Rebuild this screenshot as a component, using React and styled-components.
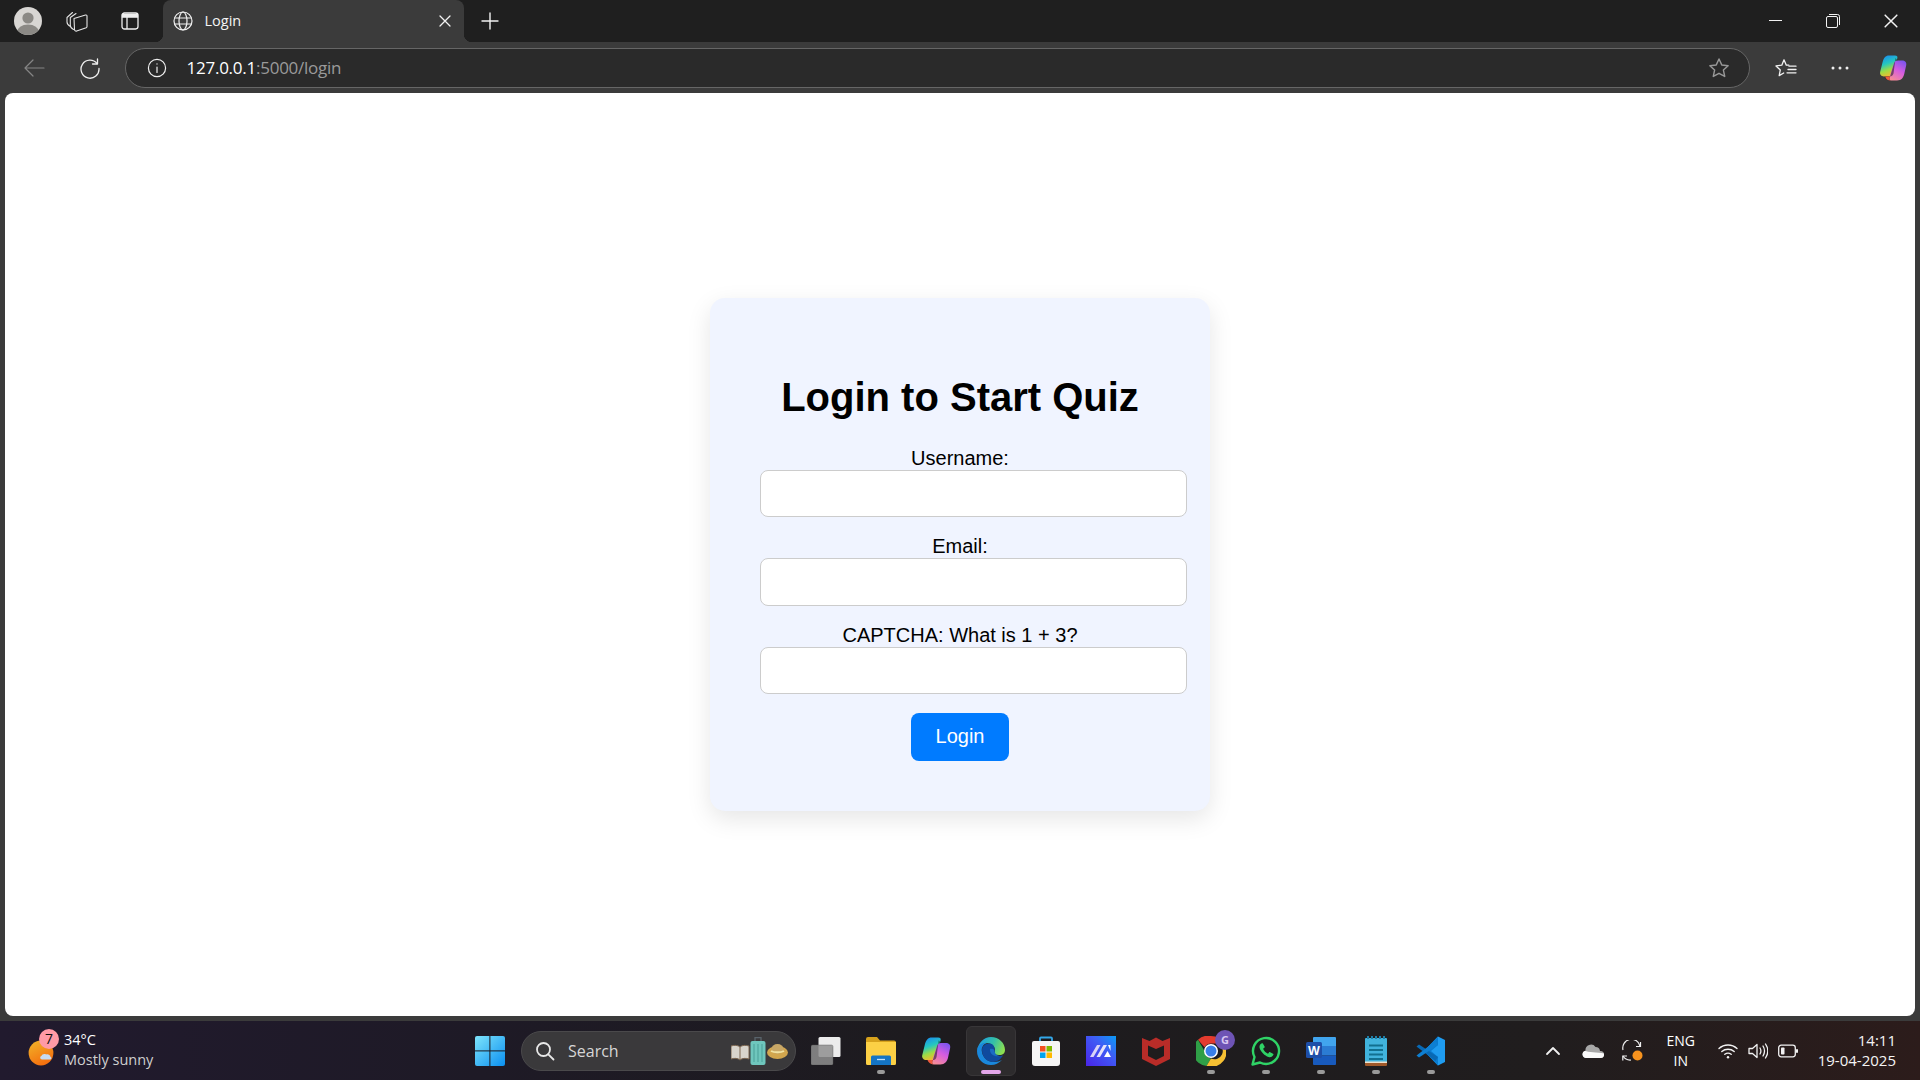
import styled, { createGlobalStyle } from "styled-components"

const GlobalStyle = createGlobalStyle`
	* {
		box-sizing: border-box;
	}
	html,
	body {
		margin: 0;
		height: 100%;
		overflow: hidden;
		background: #3b3b3b;
	}
`

const uiFont = `"Open Sans", "Noto Sans", sans-serif`

const Line = ({ c = "#fff", w = 1.4, children, size = 24, view = "0 0 24 24" }) => (
	<svg width={size} height={size} viewBox={view} fill="none" stroke={c} strokeWidth={w} strokeLinecap="round" strokeLinejoin="round">
		{children}
	</svg>
)

const AvatarIcon = () => (
	<svg width="28" height="28" viewBox="0 0 28 28">
		<circle cx="14" cy="14" r="14" fill="#d8d6d3" />
		<clipPath id="av">
			<circle cx="14" cy="14" r="14" />
		</clipPath>
		<g clipPath="url(#av)" fill="#8b8985">
			<circle cx="14" cy="11" r="5.6" />
			<ellipse cx="14" cy="25" rx="11" ry="7.5" />
		</g>
	</svg>
)

const CollectionsIcon = () => (
	<Line size={24} w={1.1} c="#e4e4e4">
		<path d="M5.500 17.500C3.500 16.500 2 15 2 13V8.500L7.500 3.500" />
		<path d="M8.500 20.500c-2-.9-3.200-2.400-3.200-4.200V8.500L11 4.500" />
		<path d="M9 9.500 20.500 6c.7-.2 1.500.3 1.500 1v10.500c0 .6-.3 1-.8 1.200l-9.500 3.300c-1 .4-2.200-.3-2.200-1.400Z" />
	</Line>
)

const VerticalTabsIcon = () => (
	<svg width="18" height="18" viewBox="0 0 18 18" fill="none" stroke="#efefef" strokeWidth="1.3">
		<rect x="1" y="1" width="16" height="16" rx="2.4" />
		<path d="M1.5 2.5h15v2.6h-15z" fill="#efefef" />
		<path d="M6 5v12" />
	</svg>
)

const GlobeIcon = () => (
	<Line size={20} w={1.2} c="#f0f0f0" view="0 0 20 20">
		<circle cx="10" cy="10" r="9" />
		<ellipse cx="10" cy="10" rx="4" ry="9" />
		<path d="M1.6 7h16.8M1.6 13h16.8" />
	</Line>
)

const CloseIcon = ({ size = 12 }) => (
	<Line size={size} w={1.3} c="#f2f2f2" view="0 0 12 12">
		<path d="M1 1l10 10M11 1 1 11" />
	</Line>
)

const PlusIcon = () => (
	<Line size={18} w={1.4} c="#f2f2f2" view="0 0 18 18">
		<path d="M9 1v16M1 9h16" />
	</Line>
)

const BackIcon = () => (
	<Line size={22} w={1.2} c="#858585" view="0 0 22 22">
		<path d="M2 11h19M10 3l-8 8 8 8" />
	</Line>
)

const RefreshIcon = () => (
	<Line size={22} w={1.3} c="#f0f0f0" view="0 0 22 22">
		<path d="M18 6.500A9 9 0 1 0 20 11.500" />
		<path d="M18.500 2v5h-5" />
	</Line>
)

const InfoIcon = () => (
	<Line size={20} w={1.2} c="#f0f0f0" view="0 0 20 20">
		<circle cx="10" cy="10" r="8.6" />
		<path d="M10 9v5.4M10 5.8v.3" />
	</Line>
)

const starPath = "M10 1.8l2.5 5.4 5.8.7-4.3 4 1.2 5.8L10 14.8l-5.2 2.9L6 11.9l-4.3-4 5.8-.7Z"

const StarIcon = () => (
	<Line size={22} w={1.3} c="#989898" view="0 0 20 20">
		<path d={starPath} />
	</Line>
)

const FavoritesIcon = () => (
	<Line size={22} w={1.3} c="#f2f2f2" view="0 0 22 20">
		<path d="M9 1.8l2.3 5.4h2.5M8.7 15 4.2 17.6 5.3 11.9 1 7.9l5.8-.7L9 1.8" />
		<path d="M14 8.2h7M13 11.5h8M12 14.8h9" />
	</Line>
)

const DotsIcon = () => (
	<svg width="18" height="4" viewBox="0 0 18 4" fill="#efefef">
		<circle cx="2" cy="2" r="1.5" />
		<circle cx="9" cy="2" r="1.5" />
		<circle cx="16" cy="2" r="1.5" />
	</svg>
)

const CopilotIcon = ({ id, size = 28 }) => (
	<svg width={size} height={size} viewBox="0 0 28 28">
		<defs>
			<linearGradient id={`${id}a`} x1="0.2" y1="0" x2="0.5" y2="1">
				<stop offset="0" stopColor="#1a8cf0" />
				<stop offset="0.4" stopColor="#25c7c0" />
				<stop offset="0.7" stopColor="#9ddc45" />
				<stop offset="1" stopColor="#f6b82e" />
			</linearGradient>
			<linearGradient id={`${id}b`} x1="0.8" y1="0" x2="0.3" y2="1">
				<stop offset="0" stopColor="#7a55ee" />
				<stop offset="0.5" stopColor="#d65ce0" />
				<stop offset="1" stopColor="#f58a9a" />
			</linearGradient>
		</defs>
		<path d="M10 1.500h6c2 0 2.800 1 2.300 2.800L14 19.500c-.6 2-1.800 3-4 3H5C2.300 22.500.5 20.500 1.200 17.800L3.500 8.500C4.600 4 6.500 1.500 10 1.500Z" fill={`url(#${id}a)`} />
		<path d="M18.500 6.500h4.500c3 0 4.800 1.700 4.200 4.800l-1.900 8.500c-1 4.300-3 6.700-7.300 6.700h-6c-1.700 0-2.400-1.100-1.900-2.500L15 9.500c.6-2 1.600-3 3.500-3Z" fill={`url(#${id}b)`} />
		<path d="M16.500 4 18.500 6.500c-1.900 0-2.900 1-3.500 3L10.600 24c-.3 1 0 2 .9 2.500-2.500 0-5-1-6-4h5c2.200 0 3.400-1 4-3Z" fill="#1a1a22" opacity="0.55" />
		<path d="M6 22.500c1.300 3 3 4 5.500 4-.9-.5-1.200-1.500-.9-2.500l.5-1.500Z" fill="#ef5a3c" />
	</svg>
)

const SunCloudIcon = () => (
	<svg width="30" height="30" viewBox="0 0 30 30">
		<defs>
			<linearGradient id="sun" x1="0" y1="0" x2="0.5" y2="1">
				<stop offset="0" stopColor="#f1b62a" />
				<stop offset="1" stopColor="#f4700f" />
			</linearGradient>
		</defs>
		<circle cx="13" cy="15" r="12.4" fill="url(#sun)" />
		<path d="M14 21.500c-1.800 0-2.600-2.700-.6-3.400.6-2 3-2.600 4.700-1.600 1.700-.7 4.200.3 4.300 2.200 1.700 1 1 2.800-.7 2.800Z" fill="#c7dbf2" />
	</svg>
)

const WinLogo = () => (
	<svg width="30" height="30" viewBox="0 0 30 30">
		<defs>
			<linearGradient id="win" x1="0" y1="0" x2="1" y2="1">
				<stop offset="0" stopColor="#7ee4fb" />
				<stop offset="1" stopColor="#0a8ff0" />
			</linearGradient>
		</defs>
		<rect width="30" height="30" rx="2" fill="url(#win)" />
		<path d="M14.900 0v30M0 14.900h30" stroke="#1b1920" strokeWidth="1" />
	</svg>
)

const SearchIcon = () => (
	<Line size={20} w={1.8} c="#e8e8e8" view="0 0 20 20">
		<circle cx="8.500" cy="8.500" r="6.500" />
		<path d="M13.300 13.300 18.500 18.500" />
	</Line>
)

const SearchArt = () => (
	<svg width="57" height="28" viewBox="0 0 57 28">
		<path d="M0 9C3 8 7 8 9 10c2-2 6-2 9-1v13c-3-1-7-1-9 1-2-2-6-2-9-1Z" fill="#d8d4cc" stroke="#7c6650" />
		<path d="M9 10v13" stroke="#7c6650" />
		<path d="M24 4V.7h6V4" fill="none" stroke="#59636b" strokeWidth="1.300" />
		<rect x="19.500" y="4" width="15" height="24" rx="2" fill="#6fc6bd" />
		<path d="M23 7v18M27 7v18M31 7v18" stroke="#4a9f98" />
		<ellipse cx="46.500" cy="15.500" rx="10.500" ry="6.500" fill="#d2a64e" />
		<ellipse cx="46.500" cy="12" rx="6" ry="5" fill="#c8a766" />
		<path d="M40 14c3 1.800 10 1.800 13 0" stroke="#f1e3a2" strokeWidth="2" fill="none" />
	</svg>
)

const TaskViewIcon = () => (
	<svg width="30" height="28" viewBox="0 0 30 28">
		<rect x="7.500" y="0" width="22" height="20" rx="1.500" fill="#ececec" />
		<rect x="0" y="8" width="22" height="20" rx="1.500" fill="#8f8f8f" fillOpacity="0.85" />
		<rect x="0" y="8" width="22" height="20" rx="1.500" fill="none" stroke="#555" strokeOpacity="0.4" />
	</svg>
)

const ExplorerIcon = () => (
	<svg width="30" height="28" viewBox="0 0 30 28">
		<path d="M0 2a2 2 0 0 1 2-2h9l3 3.500h14a2 2 0 0 1 2 2V10H0Z" fill="#d7a21c" />
		<path d="M0 5h30v21.500a1.500 1.500 0 0 1-1.500 1.500h-27A1.500 1.500 0 0 1 0 26.500Z" fill="#fcd045" />
		<path d="M5 20a1.500 1.500 0 0 1 1.500-1.500h17A1.500 1.500 0 0 1 25 20v8H5Z" fill="#1474c4" />
		<path d="M11 22.500h8" stroke="#bfe0fa" strokeWidth="1.300" />
	</svg>
)

const EdgeIcon = () => (
	<svg width="30" height="30" viewBox="0 0 30 30">
		<defs>
			<linearGradient id="edgeA" x1="0" y1="0.3" x2="1" y2="0.6">
				<stop offset="0" stopColor="#1a9be6" />
				<stop offset="0.55" stopColor="#35c1a6" />
				<stop offset="1" stopColor="#8fe04e" />
			</linearGradient>
		</defs>
		<path d="M1 15C2 7 8 1 15 1c8 0 14 6 14 13 0 3-2 5-6 5-3 0-5-1-5-2s1-1 1-3c0-4-4-7-8-7-5 0-9 3-10 8Z" fill="url(#edgeA)" />
		<path d="M1 15C1 10 6 6 11 7c-4 1-6 5-5 9 1 6 6 10 12 10 3 0 6-1 8-2-3 3-7 5-11 5C7 29 1 23 1 15Z" fill="#1a88dc" />
		<path d="M6 14c0-4 4-7 8-6.500 3 .5 5 3 4.500 6.500-.5 3 2 6 5 6 1.500 0 3-.3 3.500-1-1 3-5 7-10 7-6 0-11-5-11-12Z" fill="#0f4a9e" />
		<path d="M14 13c2-.5 4 .5 4.500 1-.5 3 2 6 5 6-4 1-10-1-9.500-7Z" fill="#1a6cc4" />
	</svg>
)

const StoreIcon = () => (
	<svg width="30" height="30" viewBox="0 0 30 30">
		<path d="M9 6V2.500a1 1 0 0 1 1-1h10a1 1 0 0 1 1 1V6" fill="none" stroke="#33a7e8" strokeWidth="1.800" />
		<path d="M1 7a2 2 0 0 1 2-2h24a2 2 0 0 1 2 2v20a3 3 0 0 1-3 3H4a3 3 0 0 1-3-3Z" fill="#f5f5f5" />
		<rect x="9" y="10" width="5.500" height="5.500" fill="#f25022" />
		<rect x="15.500" y="10" width="5.500" height="5.500" fill="#7fba00" />
		<rect x="9" y="16.500" width="5.500" height="5.500" fill="#00a4ef" />
		<rect x="15.500" y="16.500" width="5.500" height="5.500" fill="#ffb900" />
	</svg>
)

const MazeIcon = () => (
	<svg width="30" height="30" viewBox="0 0 30 30">
		<defs>
			<linearGradient id="maze" x1="0" y1="1" x2="1" y2="0">
				<stop offset="0" stopColor="#4a24e8" />
				<stop offset="0.6" stopColor="#3f5cf5" />
				<stop offset="1" stopColor="#0a9cf5" />
			</linearGradient>
		</defs>
		<rect width="30" height="30" fill="url(#maze)" />
		<path d="M4 21 11 9h3.500L7.500 21Z" fill="#d9d4f7" />
		<path d="M10.500 21 17.500 9H21L14 21Z" fill="#e6e3fa" />
		<path d="M18 21 21.500 15 25 21ZM22 9h2.500v6Z" fill="#ffffff" />
	</svg>
)

const McAfeeIcon = () => (
	<svg width="28" height="30" viewBox="0 0 28 30">
		<path d="M0 2 7.500 5 14 1.500 20.500 5 28 2v21L14 30 0 23Z" fill="#b92c28" />
		<path d="M6 9.500l8 3.500 8-3.500v10.500l-8 4-8-4Z" fill="#1e1c1d" />
	</svg>
)

const ChromeIcon = () => (
	<svg width="30" height="30" viewBox="0 0 30 30">
		<path d="M15 0a15 15 0 0 1 13 7.500H15a7.500 7.500 0 0 0-6.500 3.800L2 3.700A15 15 0 0 1 15 0Z" fill="#e33b2e" />
		<path d="M2 3.700l6.500 11.300a7.500 7.500 0 0 0 6.500 7.500L10.500 30A15 15 0 0 1 2 3.700Z" fill="#2f9f47" />
		<path d="M28 7.500A15 15 0 0 1 10.500 30L15 22.500a7.500 7.500 0 0 0 7-15Z" fill="#f6c033" />
		<circle cx="15" cy="15" r="7" fill="#fff" />
		<circle cx="15" cy="15" r="5.500" fill="#3a7fe8" />
	</svg>
)

const WhatsAppIcon = () => (
	<svg width="30" height="30" viewBox="0 0 30 30">
		<path d="M1.500 28.500 3.500 21A13 13 0 1 1 9 26.500Z" fill="#1b1d1e" stroke="#2fd366" strokeWidth="2.400" strokeLinejoin="round" />
		<path d="M10.500 7.500c-1.500.8-2.500 2.500-1.800 4.800 1.200 3.700 5 7.500 8.800 8.700 2.300.6 4-.4 4.800-1.900.3-.6.200-1.100-.3-1.400l-2.800-1.500c-.5-.2-.9-.1-1.200.3l-1 1.200c-2.200-.8-4.100-2.700-4.900-4.900l1.200-1c.4-.3.5-.7.300-1.200L12 7.800c-.3-.5-.9-.6-1.500-.3Z" fill="#2fd366" />
	</svg>
)

const WordIcon = () => (
	<svg width="30" height="28" viewBox="0 0 30 28">
		<path d="M7 1a1 1 0 0 1 1-1h21a1 1 0 0 1 1 1v8H7Z" fill="#41a5ee" />
		<rect x="7" y="9" width="23" height="9.500" fill="#2b7cd3" />
		<path d="M7 18.500h23V27a1 1 0 0 1-1 1H8a1 1 0 0 1-1-1Z" fill="#185abd" />
		<rect x="0" y="5" width="16" height="16" rx="1.500" fill="#1e4fa8" />
		<text x="8" y="17.500" textAnchor="middle" fontFamily="Liberation Sans" fontWeight="700" fontSize="12.500" fill="#fff">W</text>
	</svg>
)

const NotepadIcon = () => (
	<svg width="24" height="30" viewBox="0 0 24 30">
		<rect x="1" y="2" width="22" height="26" rx="1" fill="#41b3dc" />
		<path d="M1 26.500h22V29a1 1 0 0 1-1 1H2a1 1 0 0 1-1-1Z" fill="#a0592a" />
		<path d="M1 25.500h22v1.500H1Z" fill="#e8e1d0" />
		<path d="M4 0v3M8 0v3M12 0v3M16 0v3M20 0v3" stroke="#1f7fa8" strokeWidth="2" />
		<path d="M5 9.500h14M5 14h14M5 18.500h14M5 23h14" stroke="#12708f" strokeWidth="1.800" />
	</svg>
)

const VsCodeIcon = () => (
	<svg width="30" height="30" viewBox="0 0 30 30">
		<path d="M22 0.500 29 4v22l-7 3.500L8 15Z" fill="#1f9cf0" />
		<path d="M22 0.500 8 15l14 14.500V21l-7-6 7-6Z" fill="#0a7cd0" />
		<path d="M3 8.500.5 10.500 19.500 25 22 21Z" fill="#0869b5" />
		<path d="M3 21.500.5 19.500 19.500 5 22 9Z" fill="#0e7fd2" />
	</svg>
)

const ChevronUp = () => (
	<Line size={16} w={1.8} c="#f0f0f0" view="0 0 16 16">
		<path d="M2 11l6-6 6 6" />
	</Line>
)

const CloudIcon = () => (
	<svg width="22" height="14" viewBox="0 0 22 14">
		<path d="M4 14a3.700 3.700 0 0 1-.5-7.300A5.500 5.500 0 0 1 13.500 3 4.500 4.500 0 0 1 18 7h.5a3.500 3.500 0 0 1 0 7Z" fill="#a8a8a8" />
		<path d="M4 14a3.700 3.700 0 0 1-1-7.200C6 8.500 15 8 22 9.500a3.500 3.500 0 0 1-3.500 4.500Z" fill="#fafafa" />
	</svg>
)

const SyncIcon = () => (
	<svg width="22" height="22" viewBox="0 0 22 22" fill="none" stroke="#efefef" strokeWidth="1.200">
		<path d="M1 10A8.500 8.500 0 0 1 18 6" />
		<path d="M18.500 2v4.500H14" />
		<path d="M5 16H.8v4.500" />
		<path d="M1 16a8.500 8.500 0 0 0 8 4" />
		<circle cx="15.500" cy="15.500" r="5" fill="#f7931e" stroke="none" />
	</svg>
)

const WifiIcon = () => (
	<svg width="20" height="16" viewBox="0 0 20 16" fill="none" stroke="#f2f2f2" strokeWidth="1.400" strokeLinecap="round">
		<path d="M1 5.500c5-4.700 13-4.700 18 0" />
		<path d="M3.800 8.500c3.500-3 8.900-3 12.400 0" />
		<path d="M6.800 11.300c2-1.500 4.400-1.500 6.400 0" />
		<circle cx="10" cy="14.300" r="1.200" fill="#f2f2f2" stroke="none" />
	</svg>
)

const VolumeIcon = () => (
	<svg width="20" height="18" viewBox="0 0 20 18" fill="none" stroke="#f2f2f2" strokeWidth="1.300" strokeLinejoin="round" strokeLinecap="round">
		<path d="M1 6.500h3.500L9 2.500v13l-4.500-4H1Z" />
		<path d="M12 6c1.200 2 1.200 4 0 6M15 4c2 3.300 2 6.700 0 10M17.500 2c3 4.500 3 9.500 0 14" />
	</svg>
)

const BatteryIcon = () => (
	<svg width="20" height="14" viewBox="0 0 20 14">
		<rect x="0.700" y="1.200" width="16.600" height="11.600" rx="2.500" fill="none" stroke="#f2f2f2" strokeWidth="1.300" />
		<rect x="3" y="3.500" width="3.500" height="7" rx="0.800" fill="#f2f2f2" />
		<rect x="18" y="5" width="2" height="4" rx="1" fill="#f2f2f2" />
	</svg>
)

const taskApps = [
	{ key: "taskview", icon: <TaskViewIcon /> },
	{ key: "explorer", icon: <ExplorerIcon />, dot: "idle" },
	{ key: "copilot", icon: <CopilotIcon id="taskCopilot" size={30} /> },
	{ key: "edge", icon: <EdgeIcon />, dot: "active" },
	{ key: "store", icon: <StoreIcon /> },
	{ key: "maze", icon: <MazeIcon /> },
	{ key: "mcafee", icon: <McAfeeIcon /> },
	{ key: "chrome", icon: <ChromeIcon />, dot: "idle", badge: "G" },
	{ key: "whatsapp", icon: <WhatsAppIcon />, dot: "idle" },
	{ key: "word", icon: <WordIcon />, dot: "idle" },
	{ key: "notepad", icon: <NotepadIcon />, dot: "idle" },
	{ key: "vscode", icon: <VsCodeIcon />, dot: "idle" },
]

const fields = [
	{ label: "Username:", type: "text" },
	{ label: "Email:", type: "email" },
	{ label: "CAPTCHA: What is 1 + 3?", type: "text" },
]

const App = () => {
	return (
		<Screen>
			<GlobalStyle />
			<TabStrip>
				<Slot $w={36} $ml={10}>
					<AvatarIcon />
				</Slot>
				<Slot $w={48} $ml={7}>
					<CollectionsIcon />
				</Slot>
				<Slot $w={48} $ml={5}>
					<VerticalTabsIcon />
				</Slot>
				<Tab>
					<GlobeIcon />
					<TabTitle>Login</TabTitle>
					<CloseIcon />
				</Tab>
				<Slot $w={50} $ml={1}>
					<PlusIcon />
				</Slot>
				<WindowControls>
					<Slot $w={58}>
						<MinimizeLine />
					</Slot>
					<Slot $w={58}>
						<svg width="14" height="14" viewBox="0 0 14 14" fill="none" stroke="#f2f2f2" strokeWidth="1">
							<rect x="0.500" y="2.500" width="11" height="11" rx="1.500" />
							<path d="M3 .5h8.500A2 2 0 0 1 13.500 2.500V11" />
						</svg>
					</Slot>
					<Slot $w={58}>
						<CloseIcon size={14} />
					</Slot>
				</WindowControls>
			</TabStrip>

			<Toolbar>
				<Slot $w={50} $ml={9}>
					<BackIcon />
				</Slot>
				<Slot $w={50} $ml={5.5}>
					<RefreshIcon />
				</Slot>
				<AddressBar>
					<Slot $w={62}>
						<InfoIcon />
					</Slot>
					<Url>
						<b>127.0.0.1</b>:5000/login
					</Url>
					<Slot $w={60}>
						<StarIcon />
					</Slot>
				</AddressBar>
				<Slot $w={55} $ml={8}>
					<FavoritesIcon />
				</Slot>
				<Slot $w={54}>
					<DotsIcon />
				</Slot>
				<Slot $w={52}>
					<CopilotIcon id="barCopilot" />
				</Slot>
			</Toolbar>

			<Page>
				<Card>
					<Title>Login to Start Quiz</Title>
					<form onSubmit={(e) => e.preventDefault()}>
						{fields.map((f) => (
							<Field key={f.label}>
								<FieldLabel>{f.label}</FieldLabel>
								<FieldInput type={f.type} />
							</Field>
						))}
						<LoginButton type="submit">Login</LoginButton>
					</form>
				</Card>
			</Page>

			<Taskbar>
				<Weather>
					<WeatherArt>
						<SunCloudIcon />
						<WeatherBadge>7</WeatherBadge>
					</WeatherArt>
					<WeatherText>
						<Temp>34°C</Temp>
						<Forecast>Mostly sunny</Forecast>
					</WeatherText>
				</Weather>
				<TaskButton>
					<WinLogo />
				</TaskButton>
				<SearchBox>
					<SearchIcon />
					<SearchLabel>Search</SearchLabel>
					<SearchArt />
				</SearchBox>
				{taskApps.map((app) => (
					<TaskButton key={app.key} $active={app.dot === "active"}>
						{app.icon}
						{app.badge && <AppBadge>{app.badge}</AppBadge>}
						{app.dot && <RunDot $active={app.dot === "active"} />}
					</TaskButton>
				))}
				<Tray>
					<TraySlot $w={40}>
						<ChevronUp />
					</TraySlot>
					<TraySlot $w={40}>
						<CloudIcon />
					</TraySlot>
					<TraySlot $w={40}>
						<SyncIcon />
					</TraySlot>
					<Lang>
						<span>ENG</span>
						<span>IN</span>
					</Lang>
					<TraySlot $w={30} $ml={12}>
						<WifiIcon />
					</TraySlot>
					<TraySlot $w={30}>
						<VolumeIcon />
					</TraySlot>
					<TraySlot $w={30}>
						<BatteryIcon />
					</TraySlot>
					<Clock>
						<span>14:11</span>
						<span>19-04-2025</span>
					</Clock>
				</Tray>
			</Taskbar>
		</Screen>
	)
}

export default App

const Screen = styled.div`
	display: flex;
	flex-direction: column;
	height: 100vh;
	background: #3b3b3b;
`

const TabStrip = styled.div`
	display: flex;
	align-items: stretch;
	height: 42px;
	flex: none;
	background: #1f1f1f;
`

const Slot = styled.div`
	display: flex;
	align-items: center;
	justify-content: center;
	flex: none;
	width: ${(p) => p.$w}px;
	margin-left: ${(p) => p.$ml || 0}px;
`

const Tab = styled.div`
	position: relative;
	display: flex;
	align-items: center;
	width: 301px;
	margin-left: 9px;
	padding: 0 13.500px 0 9.500px;
	background: #3b3b3b;
	border-radius: 8px 8px 0 0;
	color: #f4f4f4;

	&::before,
	&::after {
		content: "";
		position: absolute;
		bottom: 0;
		width: 8px;
		height: 8px;
	}
	&::before {
		left: -8px;
		background: radial-gradient(circle at 0 0, #1f1f1f 8px, #3b3b3b 8.5px);
	}
	&::after {
		right: -8px;
		background: radial-gradient(circle at 100% 0, #1f1f1f 8px, #3b3b3b 8.5px);
	}
`

const TabTitle = styled.span`
	flex: 1;
	margin: 0 0 2px 12px;
	font: 14.500px ${uiFont};
`

const WindowControls = styled.div`
	display: flex;
	margin-left: auto;
`

const MinimizeLine = styled.div`
	width: 13px;
	height: 1px;
	margin-bottom: 2px;
	background: #f2f2f2;
`

const Toolbar = styled.div`
	display: flex;
	align-items: center;
	height: 51px;
	flex: none;
	padding: 1px 1px 0 0;
	background: #3b3b3b;
`

const AddressBar = styled.div`
	display: flex;
	align-items: center;
	align-self: center;
	flex: 1;
	height: 40px;
	margin-left: 10.500px;
	border: 1px solid #666;
	border-radius: 20px;
	background: #2a2a2a;
`

const Url = styled.div`
	flex: 1;
	margin: 0 0 2px -1.500px;
	font: 17px ${uiFont};
	letter-spacing: -0.25px;
	color: #9a9a9a;

	b {
		font-weight: 400;
		color: #fff;
	}
`

const Page = styled.main`
	display: flex;
	align-items: center;
	justify-content: center;
	flex: 1;
	margin: 0 5px 5px;
	background: #fff;
	border-radius: 8px;
`

const Card = styled.section`
	width: 500px;
	padding: 50px;
	text-align: center;
	font-family: "Liberation Sans", Arial, sans-serif;
	color: #000;
	background: #f0f4ff;
	border-radius: 15px;
	box-shadow: 0 8px 24px rgba(0, 0, 0, 0.1);
`

const Title = styled.h1`
	margin: 26px 0 26.800px;
	font-size: 40px;
	line-height: 46px;
	font-weight: 700;
`

const Field = styled.div`
	margin-bottom: 18px;

	&:last-of-type {
		margin-bottom: 19px;
	}
`

const FieldLabel = styled.label`
	display: block;
	font-size: 20px;
	line-height: 23px;
`

const FieldInput = styled.input`
	display: block;
	box-sizing: content-box;
	width: 100%;
	height: 21.500px;
	padding: 12px 12.500px;
	background: #fff;
	border: 1px solid #ccc;
	border-radius: 8px;
	outline: none;
`

const LoginButton = styled.button`
	display: block;
	width: 98px;
	height: 48px;
	margin: 0 auto;
	padding: 0 0 2px;
	font: 20px "Liberation Sans", Arial, sans-serif;
	color: #fff;
	background: #007bff;
	border: none;
	border-radius: 8px;
`

const Taskbar = styled.footer`
	display: flex;
	align-items: center;
	height: 59px;
	flex: none;
	font-family: ${uiFont};
	color: #fff;
	background: linear-gradient(90deg, #211a2e 0%, #1e1a26 25%, #1d1b1e 50%, #201d1e 80%, #2c1c1b 100%);
`

const Weather = styled.div`
	display: flex;
	align-items: center;
	gap: 6px;
	width: 465px;
	flex: none;
	padding-left: 28px;
`

const WeatherArt = styled.div`
	position: relative;
	display: flex;
	margin-top: 4px;
`

const WeatherBadge = styled.span`
	position: absolute;
	top: -9px;
	right: -1px;
	width: 20px;
	height: 20px;
	font: 14px/20px ${uiFont};
	text-align: center;
	color: #111;
	background: #ff9aa6;
	border-radius: 50%;
`

const WeatherText = styled.div`
	display: flex;
	flex-direction: column;
	margin-top: -1px;
	font-size: 14.500px;
	line-height: 20px;
`

const Temp = styled.span`
	color: #fff;
`

const Forecast = styled.span`
	color: #cfcfcf;
`

const TaskButton = styled.div`
	position: relative;
	display: flex;
	align-items: center;
	justify-content: center;
	flex: none;
	width: 50px;
	height: 50px;
	margin-right: 5px;
	border-radius: 6px;
	background: ${(p) => (p.$active ? "#2d2b2d" : "transparent")};
	border: 1px solid ${(p) => (p.$active ? "#383638" : "transparent")};
`

const RunDot = styled.span`
	position: absolute;
	bottom: 1px;
	left: 50%;
	width: ${(p) => (p.$active ? 20 : 8)}px;
	height: 3.500px;
	transform: translateX(-50%);
	border-radius: 2px;
	background: ${(p) => (p.$active ? "#e3a6ea" : "#9a9a9a")};
`

const AppBadge = styled.span`
	position: absolute;
	top: 3px;
	right: 0;
	width: 20px;
	height: 20px;
	font: 700 11px/20px ${uiFont};
	text-align: center;
	color: #d9c8f2;
	background: #6e54b5;
	border-radius: 50%;
`

const SearchBox = styled.div`
	display: flex;
	align-items: center;
	width: 275px;
	height: 40px;
	flex: none;
	margin: 0 5px 0 1px;
	padding: 0 7px 0 13px;
	background: #3a393b;
	border: 1px solid #4a494b;
	border-radius: 20px;
`

const SearchLabel = styled.span`
	flex: 1;
	margin-left: 13px;
	font-size: 16px;
	color: #d6d6d6;
`

const Tray = styled.div`
	display: flex;
	align-items: center;
	margin-left: auto;
	padding-right: 24px;
`

const TraySlot = styled.div`
	display: flex;
	align-items: center;
	justify-content: center;
	flex: none;
	width: ${(p) => p.$w}px;
	margin-left: ${(p) => p.$ml || 0}px;
`

const Lang = styled.div`
	display: flex;
	flex-direction: column;
	align-items: center;
	width: 40px;
	margin-left: 8px;
	font-size: 14px;
	line-height: 20px;
`

const Clock = styled.div`
	display: flex;
	flex-direction: column;
	align-items: flex-end;
	margin-left: 15px;
	margin-top: -1px;
	font-size: 15px;
	line-height: 20px;
	color: #f4f4f4;
`
